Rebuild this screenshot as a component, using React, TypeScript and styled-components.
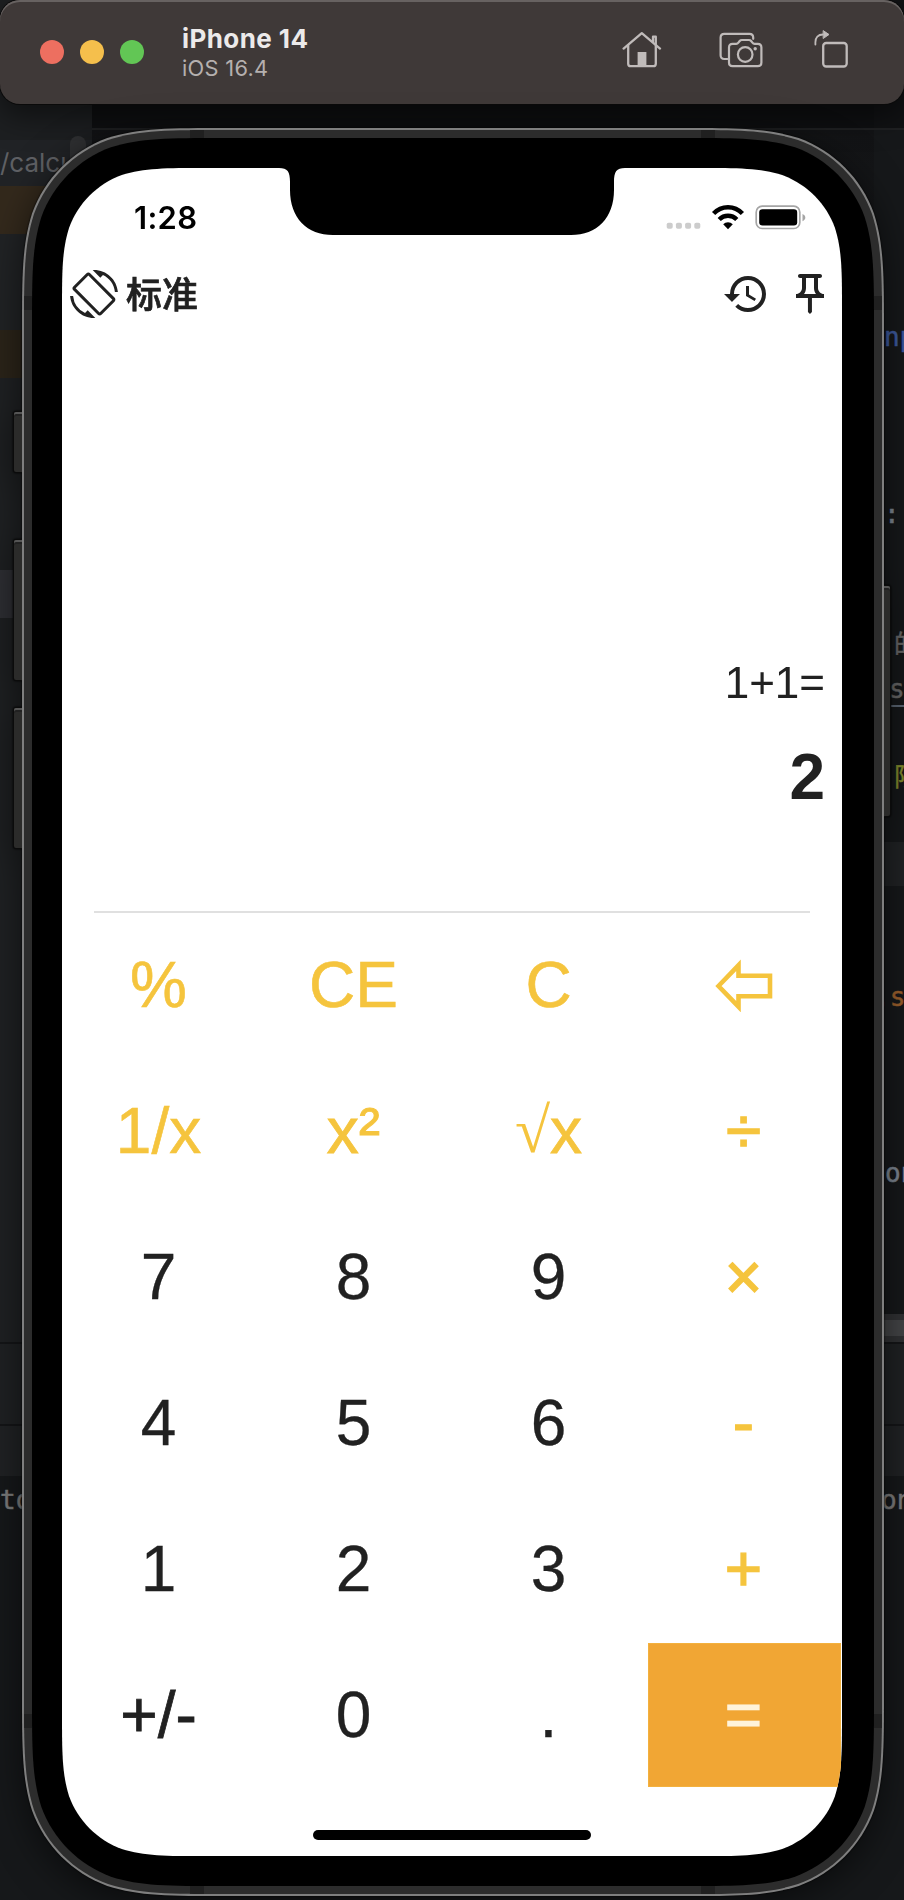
import React from "react";
import styled, { createGlobalStyle } from "styled-components";
import { MdHistory, MdOutlinePushPin, MdScreenRotation } from "react-icons/md";

const GlobalStyle = createGlobalStyle`
  *, *::before, *::after { box-sizing: border-box; }
  body { margin: 0; background: #121315; }
`;

/* Rounded rectangle with the continuous corners used by the device. */
const smoothRect = (w: number, h: number, r: number) => {
  const a = 1.528665 * r;
  const b = 1.08849 * r;
  const c = 0.868407 * r;
  const d = 0.631494 * r;
  const e = 0.0749114 * r;
  const f = 0.372824 * r;
  const g = 0.16906 * r;
  return [
    `M${a} 0 L${w - a} 0 C${w - b} 0 ${w - c} 0 ${w - d} ${e}`,
    `C${w - f} ${g} ${w - g} ${f} ${w - e} ${d} C${w} ${c} ${w} ${b} ${w} ${a}`,
    `L${w} ${h - a} C${w} ${h - b} ${w} ${h - c} ${w - e} ${h - d}`,
    `C${w - g} ${h - f} ${w - f} ${h - g} ${w - d} ${h - e} C${w - c} ${h} ${w - b} ${h} ${w - a} ${h}`,
    `L${a} ${h} C${b} ${h} ${c} ${h} ${d} ${h - e}`,
    `C${f} ${h - g} ${g} ${h - f} ${e} ${h - d} C0 ${h - c} 0 ${h - b} 0 ${h - a}`,
    `L0 ${a} C0 ${b} 0 ${c} ${e} ${d} C${g} ${f} ${f} ${g} ${d} ${e} C${c} 0 ${b} 0 ${a} 0 Z`,
  ].join(" ");
};

const Page = styled.main`
  position: relative;
  width: 904px;
  height: 1900px;
  overflow: hidden;
  background: #16181a;
`;

/* ---- editor window behind the simulator ---- */

const Backdrop = styled.div`
  position: absolute;
  inset: 0;
  display: flex;
  justify-content: space-between;
`;

const EditorColumn = styled.div<{ $width: number }>`
  position: relative;
  width: ${(p) => p.$width}px;
  display: flex;
  flex-direction: column;
  overflow: hidden;
`;

const Strip = styled.div<{ $h: number; $bg: string; $indent?: number }>`
  flex: none;
  height: ${(p) => p.$h}px;
  padding-left: ${(p) => p.$indent ?? 0}px;
  background: ${(p) => p.$bg};
  display: flex;
  align-items: center;
  overflow: hidden;
  white-space: nowrap;
`;

const Code = styled.span<{ $color: string; $size?: number; $underline?: boolean; $sans?: boolean }>`
  flex: none;
  color: ${(p) => p.$color};
  font-family: ${(p) => (p.$sans ? 'Inter, "Noto Sans CJK SC", sans-serif' : '"DejaVu Sans Mono", "Noto Sans CJK SC", monospace')};
  font-size: ${(p) => p.$size ?? 26}px;
  line-height: 32px;
  -webkit-text-stroke: ${(p) => (p.$sans ? "0" : "0.5px")} ${(p) => p.$color};
  border-bottom: ${(p) => (p.$underline ? "2px solid #5f6a78" : "none")};
`;

const ScrollThumb = styled.i`
  position: absolute;
  left: 70px;
  top: 136px;
  width: 16px;
  height: 60px;
  border-radius: 8px;
  background: #303133;
`;

const EditorTop = styled.div`
  flex: 1;
  background: linear-gradient(#0f1012 128px, #202123 128px, #202123 130px, #131416 130px, #16181a 300px);
`;

/* ---- simulator title bar ---- */

const TitleBar = styled.header`
  position: relative;
  display: flex;
  align-items: center;
  height: 104px;
  padding: 0 56px 0 40px;
  border-radius: 20px;
  background: #3f3938;
  box-shadow: inset 0 2px 0 #676261, 0 0 0 1px #0a0a0a, 0 12px 30px rgba(0, 0, 0, 0.5);
`;

const Lights = styled.div`
  display: flex;
  gap: 16px;
`;

const Light = styled.span<{ $color: string }>`
  width: 24px;
  height: 24px;
  border-radius: 50%;
  background: ${(p) => p.$color};
`;

const Titles = styled.div`
  flex: 1;
  margin-left: 38px;
  font-family: Inter, sans-serif;
`;

const DeviceName = styled.div`
  color: #eceaea;
  font-size: 26px;
  font-weight: 700;
  line-height: 32px;
  letter-spacing: 0.42px;
`;

const OsVersion = styled.div`
  color: #b5b0af;
  font-size: 21.8px;
  line-height: 27px;
  letter-spacing: 0.3px;
`;

const Tools = styled.div`
  display: flex;
  align-items: center;
  gap: 51px;
  padding-bottom: 5px;
  color: #c0bbba;
  svg { display: block; }
  svg:first-child { margin-right: 6px; }
`;

/* ---- device ---- */

const Device = styled.section`
  position: relative;
  width: 862px;
  height: 1768px;
  margin: 24px 0 0 22px;
  filter: drop-shadow(0 0 1px #000) drop-shadow(0 8px 18px rgba(0, 0, 0, 0.55));
`;

const Rim = styled.div`
  width: 862px;
  height: 1768px;
  padding: 2px;
  background: #7f7f7f;
  clip-path: path("${smoothRect(862, 1768, 135)}");
`;

const Frame = styled.div`
  position: relative;
  width: 858px;
  height: 1764px;
  padding: 8px;
  background: #2c2c2c;
  clip-path: path("${smoothRect(858, 1764, 133)}");
`;

const Bezel = styled.div`
  position: relative;
  width: 842px;
  height: 1748px;
  padding: 30px 32px 30px 30px;
  background: #000;
  clip-path: path("${smoothRect(842, 1748, 125)}");
`;

const Screen = styled.div`
  position: relative;
  display: flex;
  flex-direction: column;
  width: 780px;
  height: 1688px;
  background: #fff;
  color: #212121;
  font-family: "Liberation Sans", "Noto Sans CJK SC", sans-serif;
  clip-path: path("${smoothRect(780, 1688, 94.7)}");
`;

const Antenna = styled.i<{ $x: number; $y: number; $across?: boolean }>`
  position: absolute;
  left: ${(p) => p.$x}px;
  top: ${(p) => p.$y}px;
  width: ${(p) => (p.$across ? 14 : 8)}px;
  height: ${(p) => (p.$across ? 8 : 14)}px;
  background: #202020;
`;

const SideButton = styled.i<{ $side: "left" | "right"; $top: number; $h: number }>`
  position: absolute;
  ${(p) => (p.$side === "left" ? "left: -8px; width: 9px;" : "right: -6px; width: 7px;")}
  top: ${(p) => p.$top}px;
  height: ${(p) => p.$h}px;
  border-radius: ${(p) => (p.$side === "left" ? "2px 0 0 2px" : "0 2px 2px 0")};
  background: #2b2b2a;
  box-shadow: inset 0 2px 0 #555, inset 0 4px 0 #212121, 0 0 0 1px #0b0b0b;
`;

const Notch = styled.svg`
  position: absolute;
  left: 210px;
  top: 0;
`;

const StatusBar = styled.div`
  flex: none;
  display: flex;
  align-items: center;
  justify-content: space-between;
  height: 98px;
  padding: 0 36px 0 72px;
  color: #000;
`;

const Clock = styled.span`
  font-family: Inter, sans-serif;
  font-size: 31px;
  font-weight: 600;
  letter-spacing: 0.3px;
`;

const StatusIcons = styled.svg`
  display: block;
`;

const AppBar = styled.div`
  flex: none;
  display: flex;
  align-items: center;
  height: 56px;
  padding: 0 8px;
  svg { display: block; }
`;

const Mode = styled.span`
  flex: 1;
  margin: -4px 0 0 8px;
  font-family: "Noto Sans CJK SC", sans-serif;
  font-size: 36px;
  font-weight: 500;
  line-height: 48px;
  -webkit-text-stroke: 0.7px #212121;
`;

const AppActions = styled.div`
  display: flex;
  gap: 16px;
`;

const Display = styled.div`
  flex: none;
  display: flex;
  flex-direction: column;
  justify-content: flex-end;
  align-items: flex-end;
  height: 589px;
  padding: 0 17px 98px;
`;

const Expression = styled.div`
  font-size: 44px;
  line-height: 50px;
`;

const Result = styled.div`
  margin-top: 33px;
  font-size: 64px;
  font-weight: 700;
  line-height: 72px;
`;

const Divider = styled.hr`
  flex: none;
  width: 716px;
  height: 2px;
  margin: 0 0 0 32px;
  border: 0;
  background: #e0e0e0;
`;

const Keypad = styled.div`
  flex: none;
  display: grid;
  grid-template-columns: repeat(4, 193px);
  grid-auto-rows: 144px;
  gap: 2px;
  padding-left: 1px;
`;

type Tone = "digit" | "accent" | "equals";

const tones: Record<Tone, string> = {
  digit: "color: #212121;",
  accent: "color: #f5c43d;",
  equals: "color: #fff3da; background: #f1a634; box-shadow: inset 0 0 0 1px #f3b13f;",
};

const Key = styled.button<{ $tone: Tone; $stroke: number }>`
  display: flex;
  align-items: center;
  justify-content: center;
  padding: 0 2px 0 0;
  border: 0;
  background: none;
  font: 400 64px/72px "Liberation Sans", sans-serif;
  -webkit-text-stroke: ${(p) => p.$stroke}px currentColor;
  ${(p) => tones[p.$tone]}
`;

const Root = styled.span`
  font-family: "Liberation Serif", serif;
  -webkit-text-stroke: 0;
`;

const HomeIndicator = styled.div`
  flex: none;
  width: 278px;
  height: 10px;
  margin: 43px 0 0 251px;
  border-radius: 5px;
  background: #000;
`;

const HomeIcon = () => (
  <svg width="40" height="38" viewBox="0 0 40 38" fill="none" stroke="currentColor" strokeWidth="2.3" strokeLinecap="round" strokeLinejoin="round">
    <path d="M1.6 17.6 19.8 2.2 38 17.6" />
    <path d="M6.2 14.5v18.2c0 1.600.9 2.500 2.500 2.500h22.600c1.600 0 2.500-.9 2.500-2.500V14.500" />
    <path d="M31 10.500V5.700h2.800v7.500" />
    <path d="M15.600 21h8.800v14h-8.800z" fill="currentColor" stroke="none" />
  </svg>
);

const ScreenshotIcon = () => (
  <svg width="44" height="38" viewBox="0 0 44 38" fill="none" stroke="currentColor" strokeWidth="2.2" strokeLinecap="round" strokeLinejoin="round">
    <path d="M8.500 28H5.300c-2.400 0-3.700-1.300-3.700-3.700V6.600c0-2.400 1.300-3.700 3.700-3.700h25.200c2.400 0 3.700 1.300 3.700 3.700v1.200" />
    <path d="M13.600 12.800h3.600c1 0 1.600-.3 2.200-1.100l1.300-1.700c.6-.8 1.200-1 2.200-1h7c1 0 1.600.2 2.200 1l1.300 1.700c.6.8 1.200 1.100 2.200 1.100h3.200c2.400 0 3.600 1.300 3.600 3.600v15.200c0 2.400-1.200 3.600-3.600 3.600H13.600c-2.400 0-3.600-1.200-3.600-3.600V16.400c0-2.300 1.200-3.600 3.600-3.600z" />
    <circle cx="26.200" cy="23.500" r="7.300" />
    <circle cx="36.200" cy="17.800" r="1.700" fill="currentColor" stroke="none" />
  </svg>
);

const RotateIcon = () => (
  <svg width="34" height="40" viewBox="0 0 34 40" fill="none" stroke="currentColor" strokeWidth="2.3" strokeLinecap="round" strokeLinejoin="round">
    <rect x="9.200" y="13" width="23.500" height="23.500" rx="3" />
    <path d="M1.400 14.500v-2.300C1.400 7.300 4 4.500 9 4.500" strokeWidth="1.800" />
    <path d="M9.500 0.800 15 4.500 9.500 8.300z" fill="currentColor" strokeWidth="1" />
  </svg>
);

const BackArrow = () => (
  <svg width="62" height="54" viewBox="0 0 62 54" fill="none" stroke="currentColor" strokeWidth="4.600">
    <path d="M5.500 28 25.500 7.300v10.400h31.500v20.600H25.500v10.400z" />
  </svg>
);

const keys: { label: React.ReactNode; tone: Tone; name?: string; stroke?: number }[] = [
  { label: "%", tone: "accent", stroke: 0.6 },
  { label: "CE", tone: "accent", stroke: 0.6 },
  { label: "C", tone: "accent", stroke: 0.6 },
  { label: <BackArrow />, tone: "accent", name: "backspace" },
  { label: "1/x", tone: "accent", stroke: 0.6 },
  { label: "x²", tone: "accent", stroke: 0.9 },
  { label: <><Root>√</Root>x</>, tone: "accent", stroke: 0.8 },
  { label: "÷", tone: "accent", stroke: 1.4 },
  { label: "7", tone: "digit" },
  { label: "8", tone: "digit" },
  { label: "9", tone: "digit" },
  { label: "×", tone: "accent", stroke: 1.6 },
  { label: "4", tone: "digit" },
  { label: "5", tone: "digit" },
  { label: "6", tone: "digit" },
  { label: "-", tone: "accent", stroke: 1.2 },
  { label: "1", tone: "digit" },
  { label: "2", tone: "digit" },
  { label: "3", tone: "digit" },
  { label: "+", tone: "accent", stroke: 1.4 },
  { label: "+/-", tone: "digit", stroke: 0.8 },
  { label: "0", tone: "digit" },
  { label: ".", tone: "digit" },
  { label: "=", tone: "equals", stroke: 1.2 },
];

const Editor = () => (
  <Backdrop>
    <EditorColumn $width={92}>
      <Strip $h={140} $bg="#1d1f21" />
      <Strip $h={46} $bg="#212326">
        <Code $color="#5f6064" $sans>/calcu</Code>
      </Strip>
      <Strip $h={48} $bg="#33291c" />
      <Strip $h={96} $bg="#212325" />
      <Strip $h={48} $bg="#2b2419" />
      <Strip $h={192} $bg="#1f2123" />
      <Strip $h={48} $bg="#303136" />
      <Strip $h={724} $bg="#1f2123" />
      <Strip $h={2} $bg="#141517" />
      <Strip $h={80} $bg="#1f2123" />
      <Strip $h={2} $bg="#141517" />
      <Strip $h={50} $bg="#202224" />
      <Strip $h={48} $bg="#16181a">
        <Code $color="#7c7c7c">to</Code>
      </Strip>
      <Strip $h={376} $bg="#16181a" />
      <ScrollThumb />
    </EditorColumn>
    <EditorTop />
    <EditorColumn $width={30}>
      <Strip $h={128} $bg="#111214" />
      <Strip $h={2} $bg="#202123" />
      <Strip $h={183} $bg="#16181a" />
      <Strip $h={48} $bg="#16181a" $indent={10}>
        <Code $color="#3d5a9e">np</Code>
      </Strip>
      <Strip $h={129} $bg="#16181a" />
      <Strip $h={48} $bg="#16181a" $indent={10}>
        <Code $color="#7b8490">:</Code>
      </Strip>
      <Strip $h={86} $bg="#16181a" />
      <Strip $h={42} $bg="#16181a" $indent={20}>
        <Code $color="#6b6b6b" $size={25}>的</Code>
      </Strip>
      <Strip $h={48} $bg="#16181a" $indent={15}>
        <Code $color="#6b6b6b" $underline>s</Code>
      </Strip>
      <Strip $h={39} $bg="#16181a" />
      <Strip $h={50} $bg="#16181a" $indent={20}>
        <Code $color="#87912f" $size={25}>限</Code>
      </Strip>
      <Strip $h={39} $bg="#16181a" />
      <Strip $h={44} $bg="#202224" />
      <Strip $h={87} $bg="#16181a" />
      <Strip $h={48} $bg="#16181a">
        <Code $color="#9a5f2c">.s</Code>
      </Strip>
      <Strip $h={128} $bg="#16181a" />
      <Strip $h={48} $bg="#16181a" $indent={11}>
        <Code $color="#7b8490">on</Code>
      </Strip>
      <Strip $h={117} $bg="#16181a" />
      <Strip $h={6} $bg="#303133" />
      <Strip $h={16} $bg="#434446" />
      <Strip $h={6} $bg="#303133" />
      <Strip $h={2} $bg="#141517" />
      <Strip $h={80} $bg="#1f2123" />
      <Strip $h={2} $bg="#141517" />
      <Strip $h={50} $bg="#202224" />
      <Strip $h={48} $bg="#16181a" $indent={7}>
        <Code $color="#7c7c7c">on</Code>
      </Strip>
      <Strip $h={376} $bg="#16181a" />
    </EditorColumn>
  </Backdrop>
);

export default function App() {
  return (
    <Page>
      <GlobalStyle />
      <Editor />
      <TitleBar>
        <Lights>
          <Light $color="#ed6f60" />
          <Light $color="#f5bf4c" />
          <Light $color="#62c655" />
        </Lights>
        <Titles>
          <DeviceName>iPhone 14</DeviceName>
          <OsVersion>iOS 16.4</OsVersion>
        </Titles>
        <Tools>
          <HomeIcon />
          <ScreenshotIcon />
          <RotateIcon />
        </Tools>
      </TitleBar>
      <Device>
        <SideButton $side="left" $top={284} $h={60} />
        <SideButton $side="left" $top={412} $h={140} />
        <SideButton $side="left" $top={580} $h={140} />
        <SideButton $side="right" $top={458} $h={230} />
        <Rim>
          <Frame>
            <Antenna $x={166} $y={0} $across />
            <Antenna $x={677} $y={0} $across />
            <Antenna $x={0} $y={166} />
            <Antenna $x={850} $y={166} />
            <Antenna $x={0} $y={1584} />
            <Antenna $x={850} $y={1584} />
            <Antenna $x={166} $y={1756} $across />
            <Antenna $x={677} $y={1756} $across />
            <Bezel>
              <Screen>
                <StatusBar>
                  <Clock>1:28</Clock>
                  <StatusIcons width="140" height="28" viewBox="0 0 140 28">
                    <g fill="#cccccc">
                      <rect x="0.7" y="19.8" width="6" height="6" rx="1.8" />
                      <rect x="9.9" y="19.8" width="6" height="6" rx="1.8" />
                      <rect x="19.1" y="19.8" width="6" height="6" rx="1.8" />
                      <rect x="28.3" y="19.8" width="6" height="6" rx="1.8" />
                    </g>
                    <g fill="none" stroke="#000" strokeWidth="4.4">
                      <path d="M47.600 10.600a19.500 19.500 0 0 1 28.800 0" />
                      <path d="M53.200 16.500a12.200 12.200 0 0 1 17.600 0" />
                    </g>
                    <path d="M57.200 21.300a6.800 6.800 0 0 1 9.600 0L62 26.200z" />
                    <rect x="90.200" y="3.200" width="43.600" height="22.300" rx="6" fill="none" stroke="#a5a5a5" strokeWidth="1.700" />
                    <rect x="93.200" y="6.300" width="38" height="16.200" rx="3.300" />
                    <path d="M136.500 11c2 .8 2.800 2 2.800 3.600s-.8 2.800-2.800 3.600z" fill="#a5a5a5" />
                  </StatusIcons>
                </StatusBar>
                <AppBar>
                  <MdScreenRotation size={48} />
                  <Mode>标准</Mode>
                  <AppActions>
                    <MdHistory size={48} />
                    <MdOutlinePushPin size={48} />
                  </AppActions>
                </AppBar>
                <Display>
                  <Expression>1+1=</Expression>
                  <Result>2</Result>
                </Display>
                <Divider />
                <Keypad>
                  {keys.map((k, i) => (
                    <Key key={i} $tone={k.tone} $stroke={k.stroke ?? 0.3} aria-label={k.name}>
                      {k.label}
                    </Key>
                  ))}
                </Keypad>
                <HomeIndicator />
                <Notch width="360" height="68" viewBox="0 0 360 68">
                  <path d="M4 0h3C15.500 0 18 3.500 18 14v8C18 50 35 67 61 67h238c26 0 43-17 43-45v-8c0-10.500 2.500-14 11-14z" />
                </Notch>
              </Screen>
            </Bezel>
          </Frame>
        </Rim>
      </Device>
    </Page>
  );
}
